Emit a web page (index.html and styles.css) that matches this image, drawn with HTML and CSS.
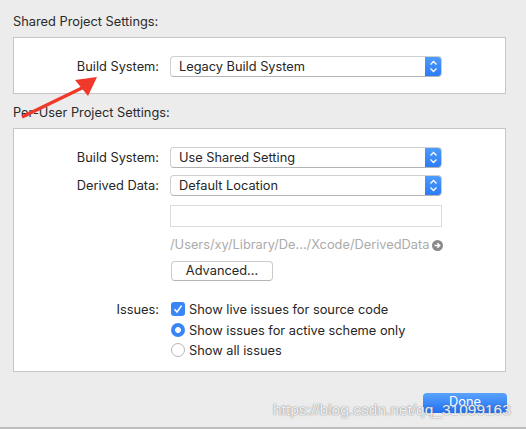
FILE: index.html
```html
<!DOCTYPE html>
<html>
<head>
<meta charset="utf-8">
<link rel="stylesheet" href="styles.css">
</head>
<body>
<div class="page">
  <div class="heading h1">Shared Project Settings:</div>
  <div class="box box1">
    <div class="row">
      <div class="label">Build System:</div>
      <div class="popup"><span class="ptext">Legacy Build System</span><span class="stepper"><svg width="17" height="21" viewBox="0 0 17 21"><path d="M5.5 8.5 L8.5 5.5 L11.5 8.5 M5.5 12.5 L8.5 15.5 L11.5 12.5" fill="none" stroke="#fff" stroke-width="1.3"/></svg></span></div>
    </div>
  </div>
  <div class="heading h2">Per-User Project Settings:</div>
  <div class="box box2">
    <div class="row">
      <div class="label">Build System:</div>
      <div class="popup"><span class="ptext">Use Shared Setting</span><span class="stepper"><svg width="17" height="21" viewBox="0 0 17 21"><path d="M5.5 8.5 L8.5 5.5 L11.5 8.5 M5.5 12.5 L8.5 15.5 L11.5 12.5" fill="none" stroke="#fff" stroke-width="1.3"/></svg></span></div>
    </div>
    <div class="row r2">
      <div class="label">Derived Data:</div>
      <div class="popup"><span class="ptext">Default Location</span><span class="stepper"><svg width="17" height="21" viewBox="0 0 17 21"><path d="M5.5 8.5 L8.5 5.5 L11.5 8.5 M5.5 12.5 L8.5 15.5 L11.5 12.5" fill="none" stroke="#fff" stroke-width="1.3"/></svg></span></div>
    </div>
    <div class="row r3">
      <div class="label"></div>
      <div class="field"></div>
    </div>
    <div class="row r4">
      <div class="label"></div>
      <div class="path">/Users/xy/Library/De.../Xcode/DerivedData <svg class="go" width="11" height="11" viewBox="0 0 11 11"><circle cx="5.5" cy="5.5" r="5.5" fill="#8a8a8a"/><path d="M2.6 5.5 H7.6 M5.4 3.2 L7.7 5.5 L5.4 7.8" fill="none" stroke="#fff" stroke-width="1.5"/></svg></div>
    </div>
    <div class="row r5">
      <div class="label"></div>
      <div class="button">Advanced...</div>
    </div>
    <div class="row r6">
      <div class="label">Issues:</div>
      <div class="opt"><span class="check"><svg width="14" height="14" viewBox="0 0 14 14"><path d="M3.5 7.2 L6 10 L10.6 3.6" fill="none" stroke="#fff" stroke-width="1.6"/></svg></span>Show live issues for source code</div>
    </div>
    <div class="row r7">
      <div class="label"></div>
      <div class="opt"><span class="radio on"></span>Show issues for active scheme only</div>
    </div>
    <div class="row r8">
      <div class="label"></div>
      <div class="opt"><span class="radio"></span>Show all issues</div>
    </div>
  </div>
  <div class="actions"><div class="done">Done</div></div>
  <div class="edge"></div>
</div>
<div class="watermark">https://blog.csdn.net/qq_31099163</div>
<svg class="annot" width="110" height="125" viewBox="0 0 110 125">
  <line x1="22" y1="117" x2="84" y2="87" stroke="#f0392b" stroke-width="3.5"/>
  <polygon points="97,77 75,80 88,96" fill="#f0392b"/>
</svg>
</body>
</html>
```
FILE: styles.css
```css
html, body {
  margin: 0;
  padding: 0;
  background: #ececec;
  height: 429px;
  overflow: hidden;
}
body {
  font-family: Inter, "Liberation Sans", Arial, sans-serif;
  font-size: 12.8px;
  color: #262626;
  position: relative;
}
.page {
  padding: 14px 20px 0 13px;
}
.heading {
  height: 16px;
  line-height: 16px;
  color: #2a2a2a;
}
.h1 { margin-bottom: 7px; }
.h2 { margin-top: 11px; margin-bottom: 7px; }
.box {
  background: #fff;
  border: 1px solid #c6c6c6;
}
.box1 { padding: 18px 0 16px; }
.box2 { padding: 18px 0 11px; }
.row {
  display: grid;
  grid-template-columns: 145px 272px;
  column-gap: 11px;
  align-items: center;
}
.label {
  text-align: right;
  color: #262626;
}
.popup {
  height: 21px;
  box-sizing: border-box;
  border: 1px solid #cfcfcf;
  border-bottom-color: #b3b3b3;
  border-radius: 4px;
  display: flex;
  align-items: center;
  background: #fff;
  overflow: hidden;
}
.ptext {
  flex: 1;
  padding-left: 8px;
}
.stepper {
  width: 17px;
  height: 21px;
  margin-right: -1px;
  background: linear-gradient(#4f9dfb, #2a7af6);
  display: flex;
}
.r2 { margin-top: 7px; }
.r3 { margin-top: 9px; }
.field {
  height: 22px;
  box-sizing: border-box;
  border: 1px solid #dcdcdc;
  background: #fff;
}
.r4 { margin-top: 10px; }
.path {
  height: 16px;
  line-height: 16px;
  color: #ababab;
  white-space: nowrap;
  display: flex;
  align-items: center;
  gap: 3px;
}
.go { flex: none; }
.r5 { margin-top: 8px; }
.button {
  width: 102px;
  height: 20px;
  box-sizing: border-box;
  border: 1px solid #cbcbcb;
  border-bottom-color: #b5b5b5;
  border-radius: 4px;
  text-align: center;
  line-height: 18px;
  background: #fff;
  margin-left: 1px;
}
.r6 { margin-top: 18px; }
.r7 { margin-top: 1px; }
.opt {
  height: 20px;
  display: flex;
  align-items: center;
  gap: 4px;
  margin-left: 1px;
  white-space: nowrap;
}
.check {
  width: 14px;
  height: 14px;
  border-radius: 3px;
  background: #3a86f7;
  display: flex;
  flex: none;
}
.radio {
  width: 14px;
  height: 14px;
  box-sizing: border-box;
  border-radius: 50%;
  border: 1px solid #b5b5b5;
  background: #fff;
  flex: none;
}
.radio.on {
  border: none;
  background: radial-gradient(circle, #fff 0 2.6px, #3a86f7 3.2px);
}
.actions {
  margin-top: 21px;
  display: flex;
  justify-content: flex-end;
  margin-right: -1px;
}
.done {
  width: 84px;
  height: 20px;
  border-radius: 4px;
  background: linear-gradient(#5aa3fb, #1f6ff5);
  color: #fff;
  text-align: center;
  line-height: 18px;
}
.edge {
  margin: 14px -20px 0 -13px;
  height: 2px;
  background: #bdbdbd;
}
.watermark {
  position: absolute;
  left: 273px;
  top: 401px;
  font-family: "Liberation Sans", Arial, sans-serif;
  font-size: 15.5px;
  color: rgba(255,255,255,0.9);
  text-shadow: 0 0 1px rgba(90,90,90,0.7), 0 0 2px rgba(120,120,120,0.5);
  white-space: nowrap;
}
.annot {
  position: absolute;
  left: 0;
  top: 0;
}
```
